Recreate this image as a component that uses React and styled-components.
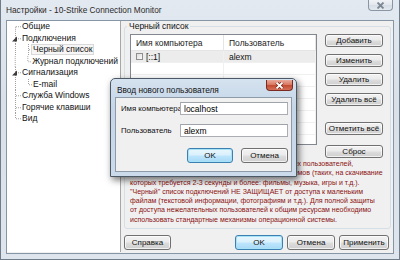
import React from "react";
import styled, { createGlobalStyle, css } from "styled-components";

const GlobalStyle = createGlobalStyle`
  html, body {
    margin: 0;
    padding: 0;
    background: #ffffff;
  }
  body {
    font-family: "Liberation Sans", Arial, sans-serif;
    font-size: 8.5px;
    color: #111;
  }
`;

const tree = [
  { label: "Общие", level: 0, first: true },
  { label: "Подключения", level: 0, expanded: true },
  { label: "Черный список", level: 1, selected: true },
  { label: "Журнал подключений", level: 1, lastChild: true },
  { label: "Сигнализация", level: 0, expanded: true },
  { label: "E-mail", level: 1, lastChild: true },
  { label: "Служба Windows", level: 0 },
  { label: "Горячие клавиши", level: 0 },
  { label: "Вид", level: 0, last: true },
];

const notice = [
  "Черный список служит для ограничения доступа тех пользователей,",
  "закачивающих файлы сравнительно больших объемов (таких, на скачивание",
  "которых требуется 2-3 секунды и более: фильмы, музыка, игры и т.д.).",
  "\"Черный\" список подключений НЕ ЗАЩИЩАЕТ от доступа к маленьким",
  "файлам (текстовой информации, фотографиям и т.д.). Для полной защиты",
  "от доступа нежелательных пользователей к общим ресурсам необходимо",
  "использовать стандартные механизмы операционной системы.",
];

function TreeLines({ item }) {
  const h = 11.5;
  const mid = h / 2;
  const dash = { stroke: "#a0a0a0", strokeWidth: 1, strokeDasharray: "1 1" };
  if (item.level === 0) {
    return (
      <svg width="14" height={h} viewBox={`0 0 14 ${h}`}>
        <line x1="8.5" y1={item.first ? mid : 0} x2="8.5" y2={item.last ? mid : h} {...dash} />
        <line x1="9" y1={mid} x2="14" y2={mid} {...dash} />
        {item.expanded && <polygon points="10,3.5 10,8.5 5,8.5" fill="#3a3a3a" />}
      </svg>
    );
  }
  return (
    <svg width="25" height={h} viewBox={`0 0 25 ${h}`}>
      <line x1="8.5" y1="0" x2="8.5" y2={h} {...dash} />
      <line x1="21.5" y1="0" x2="21.5" y2={item.lastChild ? mid : h} {...dash} />
      <line x1="22" y1={mid} x2="25" y2={mid} {...dash} />
    </svg>
  );
}

function CloseGlyph({ color, outline }) {
  return (
    <svg width="9" height="7" viewBox="0 0 9 7">
      {outline && (
        <path d="M1.5 0.5 L7.5 6.5 M7.5 0.5 L1.5 6.5" stroke={outline} strokeWidth="3.2" />
      )}
      <path d="M1.5 0.5 L7.5 6.5 M7.5 0.5 L1.5 6.5" stroke={color} strokeWidth="1.8" />
    </svg>
  );
}

export default function App() {
  return (
    <Desktop>
      <GlobalStyle />
      <Window>
        <TitleBar>
          <TitleText>Настройки - 10-Strike Connection Monitor</TitleText>
          <CloseButton>
            <CloseGlyph color="#7d8894" />
          </CloseButton>
        </TitleBar>
        <Client>
          <Tree>
            {tree.map((item) => (
              <TreeRow key={item.label}>
                <TreeLines item={item} />
                <TreeLabel $selected={item.selected}>{item.label}</TreeLabel>
              </TreeRow>
            ))}
          </Tree>
          <Pane>
            <Group>
              <Legend>Черный список</Legend>
              <GroupRow>
                <ListView>
                  <ListHeader>
                    <HeaderCell>Имя компьютера</HeaderCell>
                    <HeaderCell>Пользователь</HeaderCell>
                  </ListHeader>
                  <ListRow $active>
                    <Cell>
                      <Check />
                      [::1]
                    </Cell>
                    <Cell>alexm</Cell>
                  </ListRow>
                  {Array.from({ length: 7 }).map((_, i) => (
                    <ListRow key={i}>
                      <Cell />
                      <Cell />
                    </ListRow>
                  ))}
                </ListView>
                <SideButtons>
                  <SideButton $top={0}>Добавить</SideButton>
                  <SideButton $top={7}>Изменить</SideButton>
                  <SideButton $top={6}>Удалить</SideButton>
                  <SideButton $top={7}>Удалить всё</SideButton>
                  <SideButton $top={16}>Отметить всё</SideButton>
                  <SideButton $top={10}>Сброс</SideButton>
                </SideButtons>
              </GroupRow>
              <Notice>
                {notice.map((line) => (
                  <NoticeLine key={line}>{line}</NoticeLine>
                ))}
              </Notice>
            </Group>
            <BottomBar>
              <Button $w={47}>Справка</Button>
              <Spacer />
              <Button $w={48} $default>OK</Button>
              <Button $w={48}>Отмена</Button>
              <Button $w={50}>Применить</Button>
            </BottomBar>
          </Pane>
        </Client>
      </Window>

      <Dialog>
        <DialogTitle>
          <span>Ввод нового пользователя</span>
          <RedClose>
            <CloseGlyph color="#ffffff" outline="#7b2418" />
          </RedClose>
        </DialogTitle>
        <DialogClient>
          <FormRow>
            <FormLabel>Имя компьютера</FormLabel>
            <Input defaultValue="localhost" />
          </FormRow>
          <FormRow $gap={9}>
            <FormLabel>Пользователь</FormLabel>
            <Input defaultValue="alexm" />
          </FormRow>
          <DialogButtons>
            <Button $w={46} $h={15} $default>OK</Button>
            <Button $w={47} $h={15}>Отмена</Button>
          </DialogButtons>
        </DialogClient>
      </Dialog>
    </Desktop>
  );
}

// Styled Components
const Desktop = styled.div`
  position: relative;
  width: 400px;
  height: 260px;
  overflow: hidden;
`;

const Window = styled.div`
  box-sizing: border-box;
  width: 400px;
  height: 260px;
  display: flex;
  flex-direction: column;
  border: 1px solid #6f7c8a;
  border-top: none;
  background: linear-gradient(180deg, #e3e9f0 0%, #d9e0e8 40%, #dfe5ec 100%);
`;

const TitleBar = styled.div`
  height: 20px;
  display: flex;
  justify-content: space-between;
  align-items: flex-start;
  padding-left: 5px;
`;

const TitleText = styled.span`
  margin-top: 5px;
  font-size: 8.3px;
  color: #2a2a2a;
`;

const CloseButton = styled.div`
  width: 25px;
  height: 11px;
  margin-right: 6px;
  display: flex;
  align-items: center;
  justify-content: center;
  border: 1px solid #8a96a3;
  border-top: none;
  border-radius: 0 0 4px 4px;
  background: linear-gradient(180deg, #f0f3f6 0%, #e2e7ed 50%, #d6dde5 51%, #e4e9ef 100%);
  box-sizing: border-box;
`;

const Client = styled.div`
  flex: 1;
  display: flex;
  margin: 0 5px 5px 5px;
  border: 1px solid #8796a6;
  background: #f0f0f0;
  min-height: 0;
`;

const Tree = styled.div`
  width: 113px;
  background: #ffffff;
  border-right: 1px solid #a7a7a7;
  margin-bottom: 1px;
`;

const TreeRow = styled.div`
  height: 11.5px;
  display: flex;
  align-items: center;
`;

const TreeLabel = styled.span`
  padding: 0 1px;
  line-height: 9px;
  font-size: 8.5px;
  white-space: nowrap;
  border: 1px solid transparent;
  margin-left: -1px;
  ${(p) =>
    p.$selected &&
    css`
      border-color: #d9d9d9;
      background: #f6f6f6;
    `}
`;

const Pane = styled.div`
  flex: 1;
  display: flex;
  flex-direction: column;
  padding: 0 2px 3px 3px;
  min-width: 0;
`;

const Group = styled.fieldset`
  flex: 1;
  margin: 0;
  padding: 0 5px 3px 5px;
  border: 1px solid #d5dfe5;
  border-radius: 3px;
  min-width: 0;
`;

const Legend = styled.legend`
  margin-left: -3px;
  padding: 0 2px;
  font-size: 8.5px;
  line-height: 10px;
`;

const GroupRow = styled.div`
  display: flex;
  margin-top: 3px;
  height: 124px;
`;

const ListView = styled.div`
  width: 187px;
  height: 111px;
  box-sizing: border-box;
  border: 1px solid #828790;
  background: #ffffff;
  overflow: hidden;
`;

const columns = css`
  display: grid;
  grid-template-columns: 93px 1fr;
`;

const ListHeader = styled.div`
  ${columns};
  height: 16px;
  border-bottom: 1px solid #e5e5e5;
  box-sizing: border-box;
`;

const HeaderCell = styled.div`
  display: flex;
  align-items: center;
  padding-left: 5px;
  border-right: 1px solid #e5e5e5;
  font-size: 8.5px;
  color: #1b1b1b;
`;

const ListRow = styled.div`
  ${columns};
  height: 12px;
  box-sizing: border-box;
  border-bottom: 1px solid #f0f0f0;
  background: ${(p) => (p.$active ? "#ececec" : "#ffffff")};
`;

const Cell = styled.div`
  display: flex;
  align-items: center;
  gap: 3px;
  padding-left: 5px;
  border-right: 1px solid #f0f0f0;
  font-size: 8.5px;
`;

const Check = styled.span`
  width: 7px;
  height: 7px;
  box-sizing: border-box;
  border: 1px solid #8f8f8f;
  background: linear-gradient(135deg, #dcdcdc, #fbfbfb);
`;

const SideButtons = styled.div`
  display: flex;
  flex-direction: column;
  margin-left: 8px;
`;

const Button = styled.button`
  width: ${(p) => p.$w || 58}px;
  height: ${(p) => p.$h || 15}px;
  padding: 0;
  font-family: inherit;
  font-size: 8px;
  color: #111;
  border: 1px solid #707070;
  border-radius: 3px;
  background: linear-gradient(180deg, #f2f2f2 0%, #ebebeb 48%, #dddddd 52%, #cfcfcf 100%);
  box-shadow: inset 0 0 0 1px rgba(255, 255, 255, 0.7);
  white-space: nowrap;
  ${(p) =>
    p.$default &&
    css`
      border-color: #3c7fb1;
      background: linear-gradient(180deg, #eaf6fd 0%, #d9f0fc 48%, #bee6fd 52%, #a7d9f5 100%);
      box-shadow: inset 0 0 0 1px #a6e3f8;
    `}
`;

const SideButton = styled(Button)`
  width: 58px;
  height: 13px;
  margin-top: ${(p) => p.$top}px;
`;

const Notice = styled.div`
  margin-top: 1px;
  color: #8b1010;
  font-size: 7px;
  line-height: 9.3px;
`;

const NoticeLine = styled.div`
  white-space: nowrap;
`;

const BottomBar = styled.div`
  display: flex;
  gap: 4px;
  margin-top: 6px;
  padding-right: 2px;
`;

const Spacer = styled.div`
  flex: 1;
`;

const Dialog = styled.div`
  position: absolute;
  left: 110px;
  top: 78px;
  width: 187px;
  height: 99px;
  box-sizing: border-box;
  display: flex;
  flex-direction: column;
  border: 1px solid #4c5866;
  border-radius: 5px 5px 0 0;
  background: linear-gradient(180deg, #d5e2ef 0%, #c5d6e8 30%, #cbdbec 100%);
  box-shadow: 2px 3px 7px rgba(0, 0, 0, 0.55);
`;

const DialogTitle = styled.div`
  height: 18px;
  display: flex;
  justify-content: space-between;
  align-items: flex-start;
  padding-left: 6px;
  font-size: 8.3px;

  span {
    margin-top: 6px;
  }
`;

const RedClose = styled.div`
  width: 27px;
  height: 11px;
  margin: 1px 3px 0 0;
  box-sizing: border-box;
  display: flex;
  align-items: center;
  justify-content: center;
  border: 1px solid #7a2a20;
  border-top: none;
  border-radius: 0 0 4px 4px;
  background: linear-gradient(180deg, #e9a99b 0%, #d7765f 50%, #c24a2f 51%, #d3705a 100%);
`;

const DialogClient = styled.div`
  flex: 1;
  margin: 0 4px 4px 4px;
  border: 1px solid #8e9aa8;
  background: #f0f0f0;
  padding: 4px 1px 0 5px;
  display: flex;
  flex-direction: column;
`;

const FormRow = styled.div`
  display: flex;
  align-items: center;
  margin-top: ${(p) => p.$gap || 0}px;
`;

const FormLabel = styled.span`
  width: 59px;
  font-size: 7.8px;
  white-space: nowrap;
`;

const Input = styled.input`
  width: 108px;
  height: 13px;
  box-sizing: border-box;
  padding: 0 3px;
  font-family: inherit;
  font-size: 8.5px;
  border: 1px solid #abadb3;
  border-top-color: #9ea4aa;
  background: #ffffff;
  outline: none;
`;

const DialogButtons = styled.div`
  display: flex;
  justify-content: flex-end;
  gap: 8px;
  margin-top: 11px;
  padding-right: 2px;
`;
